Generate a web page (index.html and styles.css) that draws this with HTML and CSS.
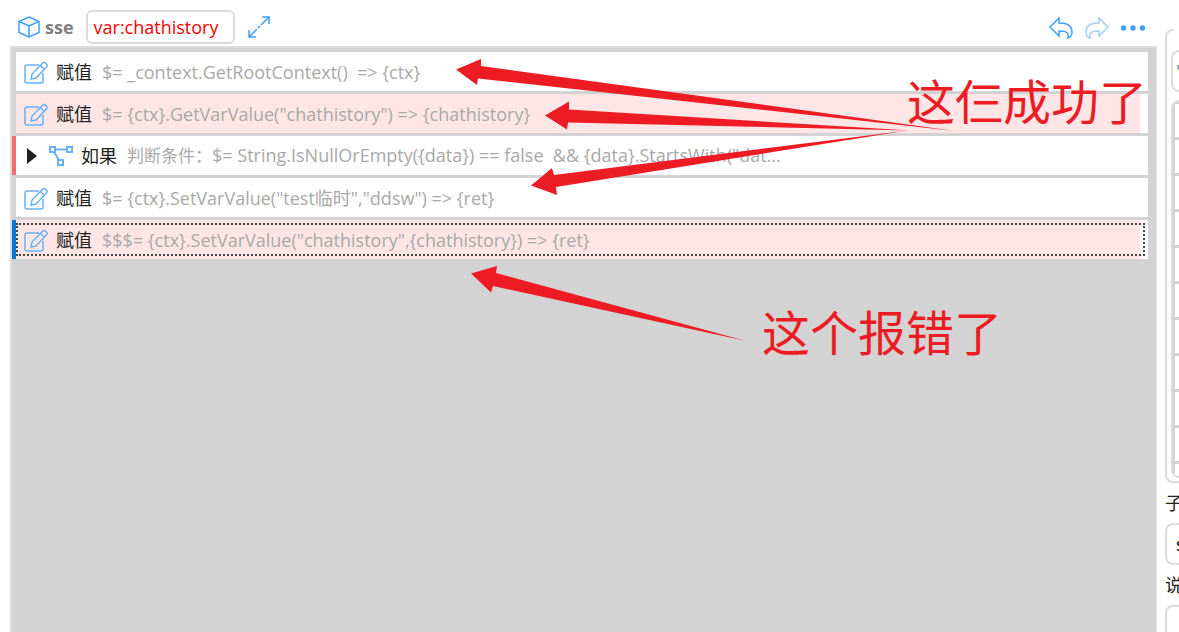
FILE: index.html
```html
<!DOCTYPE html>
<html lang="zh-CN">
<head>
    <meta charset="UTF-8"/>
    <meta name="viewport" content="width=device-width, initial-scale=1.0"/>
    <title>sse</title>
    <link rel="stylesheet" href="styles.css">
</head>
<body>
<!-- Shared icons -->
<svg class="sprite" aria-hidden="true">
    <symbol id="icon-edit" viewBox="0 0 24 24">
        <path d="M15 4H3a2 2 0 0 0-2 2v14a2 2 0 0 0 2 2h14a2 2 0 0 0 2-2v-8"/>
        <path d="M7 18l1-5L18.500 2.200a2 2 0 0 1 3 0l.9.900a2 2 0 0 1 0 2.800L12 17z"/>
        <path d="M16.500 4.500l4 4"/>
    </symbol>
</svg>
<div class="app">
    <main class="editor">
        <header class="toolbar">
            <svg class="icon cube" viewBox="0 0 22 22">
                <path d="M11 1l10 4.500v11L11 21 1 16.500v-11z"/>
                <path d="M1 5.500l10 4.500 10-4.500M11 10v11"/>
            </svg>
            <strong class="title">sse</strong>
            <button class="tag" type="button">var:chathistory</button>
            <button class="tool expand" type="button" aria-label="展开">
                <svg class="icon" viewBox="0 0 22 22">
                    <path d="M14 1h7v7M8 21H1v-7M21 1l-8 8M1 21l8-8M10 12l2-2"/>
                </svg>
            </button>
            <div class="actions">
                <button class="tool" type="button" aria-label="撤销">
                    <svg class="icon" viewBox="0 0 24 22">
                        <path d="M1 10l9-9v5c8 0 13 3 13 9 0 3-1 5-4 6 1-5-1-7-9-7v5z"/>
                    </svg>
                </button>
                <button class="tool" type="button" aria-label="重做" disabled>
                    <svg class="icon" viewBox="0 0 24 22">
                        <path d="M23 10l-9-9v5C6 6 1 9 1 15c0 3 1 5 4 6-1-5 1-7 9-7v5z"/>
                    </svg>
                </button>
                <button class="tool" type="button" aria-label="更多">
                    <svg class="icon dots" viewBox="0 0 24 22">
                        <circle cx="2.500" cy="11" r="2.700"/>
                        <circle cx="12" cy="11" r="2.700"/>
                        <circle cx="21.500" cy="11" r="2.700"/>
                    </svg>
                </button>
            </div>
        </header>
        <section class="panel">
            <ul class="steps">
                <li class="step">
                    <div class="step-body">
                        <svg class="icon"><use href="#icon-edit"/></svg>
                        <span class="name">赋值</span>
                        <span class="code">$= _context.GetRootContext()  =&gt; {ctx}</span>
                    </div>
                </li>
                <li class="step error">
                    <div class="step-body">
                        <svg class="icon"><use href="#icon-edit"/></svg>
                        <span class="name">赋值</span>
                        <span class="code">$= {ctx}.GetVarValue("chathistory") =&gt; {chathistory}</span>
                    </div>
                </li>
                <li class="step condition">
                    <div class="step-body">
                        <svg class="arrow" viewBox="0 0 10 16"><path d="M0 0l10 8-10 8z"/></svg>
                        <svg class="icon branch" viewBox="0 0 24 20">
                            <path d="M1 1h5v5H1zM18 1h5v5h-5zM9 14h5v5H9zM6 3.500h12M5 6l5 8"/>
                        </svg>
                        <span class="name">如果</span>
                        <span class="code"><span class="hint">判断条件：</span>$= String.IsNullOrEmpty({data}) == false  &amp;&amp; {data}.StartsWith("dat...</span>
                    </div>
                </li>
                <li class="step">
                    <div class="step-body">
                        <svg class="icon"><use href="#icon-edit"/></svg>
                        <span class="name">赋值</span>
                        <span class="code">$= {ctx}.SetVarValue("test临时","ddsw") =&gt; {ret}</span>
                    </div>
                </li>
                <li class="step error selected">
                    <div class="step-body">
                        <svg class="icon"><use href="#icon-edit"/></svg>
                        <span class="name">赋值</span>
                        <span class="code">$$$= {ctx}.SetVarValue("chathistory",{chathistory}) =&gt; {ret}</span>
                    </div>
                </li>
            </ul>
        </section>
    </main>
    <aside class="sidebar">
        <div class="sidebar-content">
            <fieldset class="group">
                <legend></legend>
                <input class="field value" type="text" value="&quot;&quot;" aria-label="变量"/>
                <ul class="vars">
                    <li></li><li></li><li></li><li></li><li></li><li></li>
                    <li></li><li></li><li></li><li></li><li></li>
                </ul>
            </fieldset>
            <label for="subName">子</label>
            <input class="field" id="subName" type="text" value="sse"/>
            <label for="remark">说</label>
            <textarea class="field" id="remark"></textarea>
        </div>
    </aside>
</div>
<!-- Red marks drawn over the editor -->
<div class="marks">
    <svg class="mark-arrows" width="1179" height="632" viewBox="0 0 1179 632">
        <path d="M456 69.500l25-10.500v7l474 65-477-52.500-1 6.500z"/>
        <path d="M545 115.500l24-14v8l341 21-342-8-1 7z"/>
        <path d="M531 185.500l21-17.500 2 7 350-44-348 56 1 8z"/>
        <path d="M471 273.500l26-7.500-1 7 250 68-253-55-2 6.500z"/>
    </svg>
    <p class="mark success">这仨成功了</p>
    <p class="mark failure">这个报错了</p>
</div>
</body>
</html>
```
FILE: styles.css
```css
* {
    margin: 0;
    padding: 0;
    box-sizing: border-box;
}

body {
    height: 100vh;
    overflow: hidden;
    background-color: #fff;
    color: #222;
    font-family: "Open Sans", "Noto Sans CJK SC", sans-serif;
    font-size: 18px;
}

ul {
    list-style: none;
}

.sprite {
    position: absolute;
    width: 0;
    height: 0;
}

.app {
    display: flex;
    gap: 8px;
    height: 100vh;
    padding-left: 10px;
}

.editor {
    flex: 1;
    min-width: 0;
    display: flex;
    flex-direction: column;
}

.icon {
    flex: none;
    width: 24px;
    height: 24px;
    fill: none;
    stroke: #6ab0f5;
    stroke-width: 1.5;
}

/* Toolbar */
.toolbar {
    display: flex;
    align-items: center;
    height: 46px;
    padding: 8px 12px 0 8px;
}

.toolbar .icon {
    display: block;
    height: 22px;
    stroke: #409eff;
}

.toolbar .cube {
    width: 22px;
}

.title {
    margin: 0 12px 0 5px;
    color: #808080;
}

.tag {
    height: 34px;
    padding: 0 15px 0 6px;
    border: 2px solid #dcdcdc;
    border-radius: 6px;
    background-color: #fff;
    color: #f00;
    font: inherit;
    line-height: 24px;
}

.tool {
    border: 0;
    background: none;
}

.tool:disabled {
    opacity: 0.5;
}

.expand {
    margin-left: 12px;
}

.actions {
    display: flex;
    gap: 12px;
    margin-left: auto;
    padding-top: 2px;
}

.toolbar .dots {
    fill: #409eff;
    stroke: none;
}

/* Step list */
.panel {
    flex: 1;
    padding: 4px 7px 0 0;
    border: 2px solid #dcdcdc;
    border-bottom: 0;
    background-color: #d3d3d3;
}

.steps {
    display: flex;
    flex-direction: column;
    gap: 3px;
}

.step {
    position: relative;
    height: 39px;
    padding-right: 8px;
    border-left: 4px solid #d3d3d3;
    background-color: #fff;
}

.step-body {
    display: flex;
    align-items: center;
    height: 100%;
    padding-left: 8px;
    line-height: 24px;
    white-space: pre;
}

.step-body .icon {
    margin-top: 2px;
}

.error .step-body {
    background-color: #fee6e6;
}

.condition {
    border-left-color: #f56c6c;
}

.selected {
    border-left-color: #0078d7;
}

.selected::after {
    content: "";
    position: absolute;
    inset: 3px 3px 3px 0;
    border: 2px dotted #444;
}

.name {
    margin: 0 10px 0 8px;
}

.code {
    overflow: hidden;
    color: #a9a9a9;
}

.hint {
    font-size: 17px;
}

.arrow {
    width: 10px;
    height: 16px;
    margin: 0 12px 0 3px;
    fill: #222;
}

.step-body .branch {
    height: 20px;
    margin-top: 0;
    stroke-width: 2;
}

/* Side panel, cut off by the window edge */
.sidebar {
    flex: 0 0 14px;
    overflow: hidden;
}

.sidebar-content {
    width: 300px;
    padding-top: 20px;
}

.group {
    height: 463px;
    padding: 10px 4px 4px;
    border: 2px solid #dcdcdc;
    border-radius: 8px;
}

.group legend {
    width: 60px;
    height: 20px;
    margin-left: 3px;
}

.field {
    display: block;
    width: 100%;
    height: 42px;
    padding: 0 9px;
    border: 2px solid #dcdcdc;
    border-radius: 8px;
    font: inherit;
}

.value {
    padding: 0 3px;
    color: #808080;
}

.vars {
    height: 378px;
    margin-top: 8px;
    padding: 2px 0 0 2px;
    border: 2px solid #dcdcdc;
    border-radius: 8px;
    background-color: #d3d3d3;
    overflow: hidden;
}

.vars li {
    height: 33px;
    margin-bottom: 3px;
    background-color: #d3d3d3;
}

.sidebar label {
    display: block;
    height: 40px;
    line-height: 40px;
}

.vars li {
    background-color: #fff;
}

/* Marks */
.marks {
    color: #ed1c24;
    pointer-events: none;
}

.mark-arrows {
    position: absolute;
    top: 0;
    left: 0;
    fill: #ed1c24;
}

.mark {
    position: absolute;
    font-family: "Noto Sans CJK SC", sans-serif;
    font-size: 48px;
    line-height: 56px;
}

.success {
    top: 71px;
    left: 907px;
}

.failure {
    top: 302px;
    left: 762px;
}
```
